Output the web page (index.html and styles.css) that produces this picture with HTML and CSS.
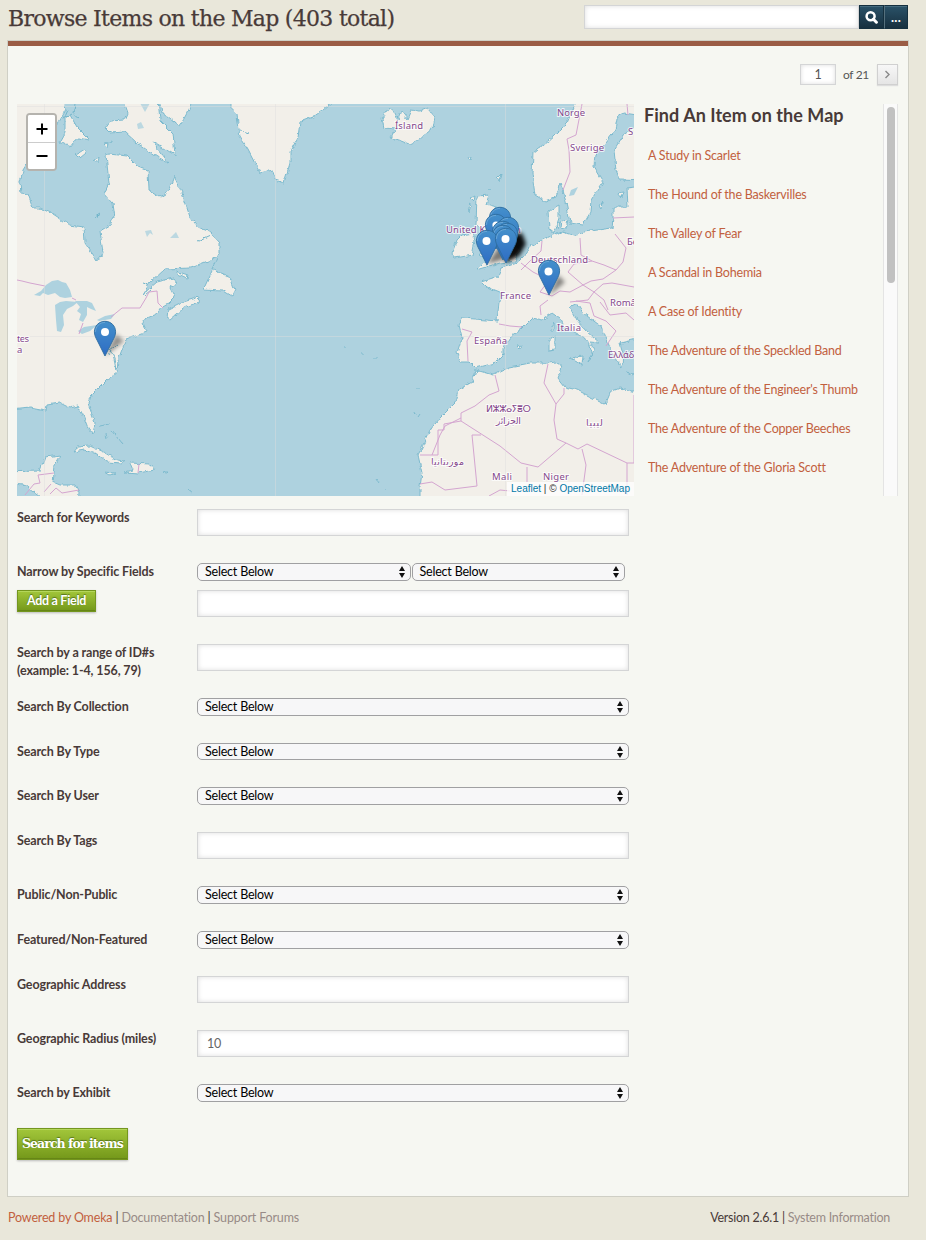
FILE: index.html
```html
<!DOCTYPE html>
<html lang="en">
<head>
<meta charset="utf-8">
<title>Browse Items on the Map</title>
<link rel="stylesheet" href="styles.css">
</head>
<body>
<svg class="defs" width="0" height="0" aria-hidden="true">
  <symbol id="updown" viewBox="0 0 6 12"><path d="M3 0L6 5H0zM0 7H6L3 12z" fill="#111"/></symbol>
</svg>
<header class="top">
  <h1 class="title">Browse Items on the Map (403 total)</h1>
  <form class="site-search">
    <input class="site-query" type="text" aria-label="Search">
    <button class="dark" type="button" aria-label="Search"><svg width="13" height="13" viewBox="0 0 13 13"><circle cx="5.6" cy="5.3" r="4" fill="none" stroke="#fff" stroke-width="2.5"/><path d="M8.4 8.2L11.400 11.200" stroke="#fff" stroke-width="3" stroke-linecap="round"/></svg></button>
    <button class="dark more" type="button">...</button>
  </form>
</header>
<main class="panel">
  <nav class="pager">
    <span class="page-no">1</span><span class="page-of">of 21</span>
    <a class="next"><svg width="7" height="9" viewBox="0 0 7 9"><path d="M1.5 1L5 4.5L1.5 8" fill="none" stroke="#888" stroke-width="1.4"/></svg></a>
  </nav>
  <section class="browse">
    <div class="map">
      <svg class="tiles" width="617" height="392" viewBox="17 104 617 392">
        <defs>
          <filter id="rough" filterUnits="userSpaceOnUse" x="0" y="90" width="650" height="420" color-interpolation-filters="sRGB">
            <feTurbulence type="fractalNoise" baseFrequency=".17" numOctaves="2" seed="4"/>
            <feDisplacementMap in="SourceGraphic" scale="5" xChannelSelector="R" yChannelSelector="G"/>
          </filter>
          <filter id="soft" x="-50%" y="-50%" width="200%" height="200%"><feGaussianBlur stdDeviation="2.2"/></filter>
          <linearGradient id="blue" x2="0" y2="1"><stop offset="0" stop-color="#4490cb"/><stop offset="1" stop-color="#2e6cc4"/></linearGradient>
          <symbol id="pin" viewBox="-1 -1 24 37" overflow="visible"><path d="M11 .3C5 .3 .4 5 .4 10.8C.4 14 1.6 16.4 3.1 19.2L11 35L18.900 19.200C20.400 16.400 21.600 14 21.600 10.800C21.600 5 17 .3 11 .3z" fill="url(#blue)" stroke="#2e6c9e" stroke-width=".9"/><path d="M11 1.400C5.600 1.400 1.500 5.600 1.500 10.800" fill="none" stroke="#72abd8" stroke-width=".8"/></symbol>
        </defs>
        <rect x="17" y="104" width="617" height="392" fill="#aed2df"/>
        <g filter="url(#rough)">
          <g class="land">
            <path d="M0 90H60L66 108L58 122L50 134L44 143L28 162L23 170L20 182L21 193L28 194L33 208L40 208L53 214L70 225L84 227L85 243L97 261L103 253L100 231L110 225L114 217L112 203L104 194L109 183L106 155L110 154L127 156L138 167L148 171L149 190L160 197L168 192L174 176L182 193L190 217L198 227L210 232L220 243L220 253L213 259L190 268L165 269L150 283L143 294L157 282L173 278L177 283L170 287L175 297L168 304L161 308L157 314L147 318L143 323L147 332L127 339L123 347L118 360L117 373L107 380L90 397L88 403L95 423L93 434L88 428L83 415L78 406L70 408L60 403L47 405L46 411L30 408L0 411z"/>
            <path d="M120 90L128 113L125 120L110 121L105 128L110 133L125 132L137 143L157 157L168 162L153 142L175 155L173 133L160 120L157 90z"/>
            <path d="M157 90L162 112L180 126L187 113L197 90zM65 117L70 115L77 127L85 135L90 140L77 138L70 147L60 142L65 133zM76 154L84 149L86 153L80 158zM94 160L99 157L98 163zM104 144L108 143L107 147zM110 142L112 141L112 143z"/>
            <path d="M218 258L211 273L205 286L202 289L222 290L232 296L235 290L230 277L213 270M176 271L188 275L187 278L178 274zM167 318L168 309L180 303L193 299L199 297L198 302L184 308L176 315L170 320z"/>
            <path d="M232 90V110L237 115L240 137L248 150L260 173L273 170L275 180L284 183L290 163L290 152L298 137L300 122L313 117L323 110L333 102L340 90z"/>
            <path d="M382 118L389 108L395 113L398 120L401 111L407 119L411 110L420 111L427 108L435 117L433 128L420 139L410 144L400 140L390 138L396 129L384 128z"/>
            <path d="M477 196L489 195L486 204L497 207L493 216L503 232L515 244L520 250L515 261L500 263L477 270L487 260L480 255L487 247L484 233L476 224zM462 235L473 233L475 240L472 255L455 258L452 253L457 240zM470 198L474 196L473 201zM468 206L471 204L469 212zM488 190L491 190zM497 178L501 174L499 182zM468 158L471 157L470 161z"/>
            <path d="M581 90L567 123L553 137L533 153L532 173L535 195L545 201L555 197L560 183L563 190L567 207L570 223L583 225L590 213L591 200L603 182L594 167L595 153L605 143L615 130L617 118L624 113L650 117V90zM650 127L634 128L623 135L614 150L616 170L620 180L650 181z"/>
            <path d="M650 185L627 188L628 207L613 207L613 218L612 228L583 232L577 236L563 232L556 235L549 229L548 211L559 205L559 218L555 230L551 236L542 240L530 247L523 257L517 263L502 268L498 277L482 282L487 287L500 292L502 300L499 302L497 321L487 320L463 318L459 325L462 337L457 353L461 362L470 362L476 368L495 363L503 355L503 347L510 337L522 328L532 318L542 320L553 313L560 318L565 328L587 340L592 355L588 361L594 350L590 342L600 343L587 332L577 320L570 307L577 303L583 313L602 327L608 343L617 363L622 367L623 353L620 343L650 336z"/>
            <path d="M650 395L620 388L610 392L605 404L597 400L577 390L565 387L558 378L562 368L557 362L548 363L530 363L510 367L493 375L476 370L472 382L458 390L455 403L440 418L430 430L422 447L418 455L422 473L420 487L420 510H650z"/>
            <path d="M550 338L555 335V350L550 351zM552 326L554 323V332L552 332zM570 358L583 356L582 365zM517 346L522 345L520 349zM626 372L634 374L633 376zM618 193L624 192L622 198zM599 206L602 201L601 209zM556 224L560 222L558 229zM562 220L568 221L566 228L561 227z"/>
            <path d="M0 472L40 471L45 457L61 455L55 465L53 482L60 485L75 485L79 492L78 510H60L34 492L24 484L0 482z"/>
            <path d="M73 452L77 447L90 446L105 453L117 460L125 461L121 463L108 462L97 454L85 450zM130 463L150 464L155 470L138 473L125 472L133 470zM105 472L115 473L110 475zM162 472L169 472L168 473z"/>
            <path d="M100 426L109 424M106 434L107 438M112 430L123 444M345 347L346 347M361 353L363 353M373 358L377 358M416 389L420 389M377 479L379 482M384 489L385 489M418 417L420 414M188 490L193 494M415 413L416 416"/>
          </g>
          <g class="water-lines"><path d="M118 344L110 350L114 358L116 370M111 350L108 355M67 110L63 119L72 114M75 104L73 114L79 119M96 217L101 214M142 283L148 285M197 242L210 236M151 290L145 295M240 130L249 133"/></g>
        </g>
        <g class="lakes">
          <path d="M34 295L41 291L46 285L52 281L58 280L62 282L66 283L70 290L72 297L65 298L60 297L55 293L48 295L43 293L40 296z"/>
          <path d="M55 305L60 302L66 301L78 302L73 306L67 309L63 315L64 325L61 332L57 331L56 320z"/>
          <path d="M75 301L87 301L92 303L96 311L91 309L87 307L87 315L83 322L79 320L81 314L77 311L80 307zM78 331L84 327L97 325L90 331L82 334zM97 320L105 316L115 314L111 319L99 321zM571 190L578 187L574 195L569 196z"/>
          <path d="M140 103L150 103L145 112zM137 124L141 122L144 128L138 129zM145 231L151 230L153 235L150 233L147 237zM170 238L176 232L179 238z" opacity=".8"/>
        </g>
        <g class="borders">
          <path d="M17 280L22 281L30 283L45 286M72 298L76 300M79 334L83 323M111 317L122 308L140 308L146 298L149 292L157 291L158 303L163 308M25 495L34 484L40 483L38 475L54 473M44 492L51 484M50 494L56 488L62 493L79 490M139 464L138 473"/>
          <path d="M582 104L576 135L567 139L569 150L570 172L563 190M627 104L628 115M613 218L634 217M580 238L581 255L592 261L604 265L616 270L623 262L626 248L615 234M542 241L541 251L530 261L521 270M521 263L533 272L549 280L540 292L552 296L560 291L570 292L583 285L568 272L574 264L592 261M583 285L591 281L603 279L616 270M583 285L594 292L603 284L612 283L634 287M594 292L588 300L570 302M548 300L540 306L541 315M499 324L510 326L522 327M462 329L472 332L467 341L468 361M576 301L590 303L594 316L606 321L616 331L606 346M600 302L610 315L626 313L634 320M594 292L604 300L608 310"/>
          <path d="M495 375L499 391L489 395L475 406L461 413V421L500 446L521 463L538 467L566 443L578 449L587 444L627 463V495M461 421L444 424V430H438V455H420M481 435H472L477 486L445 490L432 482L420 484M548 364L544 383L556 404L554 420L557 439L566 443M556 404L564 394V388M582 449L586 465L582 495M634 395V463H627M527 467V482M461 418L445 426L440 435L432 455M489 496L500 490L510 491"/>
        </g>
        <path class="grid" d="M44.500 104V496M275.500 104V496M505.500 104V496M17 106.500H634M17 336.500H634"/>
        <g class="names">
          <text x="395" y="129" textLength="28">Ísland</text><text x="557" y="116" textLength="28">Norge</text><text x="570" y="151" textLength="34">Sverige</text><text x="628" y="135">S</text>
          <text x="446" y="233" textLength="75">United Kingdom</text><text x="531" y="263" textLength="57">Deutschland</text><text x="500" y="299" textLength="31">France</text><text x="627" y="245">Бе</text><text x="610" y="306">România</text>
          <text x="474" y="344" textLength="33">España</text><text x="557" y="331" textLength="24">Italia</text><text x="608" y="358">Ελλάδα</text><text x="486" y="412" textLength="45">ⵍⵣⵣⴰⵢⴻⵔ</text><text x="496" y="424" textLength="25">الجزائر</text><text x="586" y="426" textLength="17">ليبيا</text><text x="431" y="465" textLength="33">موريتانيا</text>
          <text x="492" y="480" textLength="20">Mali</text><text x="543" y="480" textLength="26">Niger</text><text x="-22" y="342" textLength="51">United States</text><text x="17" y="353">a</text>
        </g>
        <g class="shadows" filter="url(#soft)"><path d="M105 356L116 334L124 341z" opacity=".4"/><path d="M505 263L511 235L522 233L526 244L519 256z" opacity=".95"/><path d="M487 264L500 245L508 258z" opacity=".5"/><path d="M549 296L558 275L565 282z" opacity=".45"/></g>
        <use href="#pin" x="488" y="206" width="24" height="37"/>
        <use href="#pin" x="484" y="213" width="24" height="37"/><circle cx="496" cy="225" r="3.600" fill="#fff"/>
        <use href="#pin" x="496" y="216" width="24" height="37"/>
        <use href="#pin" x="491" y="220" width="24" height="37"/>
        <use href="#pin" x="495" y="222" width="24" height="37"/>
        <use href="#pin" x="491" y="224" width="24" height="37"/>
        <use href="#pin" x="475" y="229" width="24" height="37"/><circle cx="486.500" cy="241" r="4" fill="#fff"/>
        <use href="#pin" x="494" y="227" width="24" height="37"/><circle cx="505.500" cy="239" r="4" fill="#fff"/>
        <use href="#pin" x="537" y="259" width="24" height="37"/><circle cx="548.500" cy="271.500" r="4" fill="#fff"/>
        <use href="#pin" x="93" y="320" width="24" height="37"/><circle cx="105" cy="332" r="4" fill="#fff"/>
      </svg>
      <div class="zoom">
        <button type="button" aria-label="Zoom in"><svg width="12" height="12"><path d="M6 .5V11.500M.5 6H11.500" stroke="#000" stroke-width="2"/></svg></button>
        <button type="button" aria-label="Zoom out"><svg width="12" height="12"><path d="M.5 6H11.500" stroke="#000" stroke-width="2"/></svg></button>
      </div>
      <div class="credit"><a>Leaflet</a> | © <a>OpenStreetMap</a></div>
    </div>
    <aside class="items">
      <div class="items-body">
        <h2>Find An Item on the Map</h2>
        <ul>
          <li>A Study in Scarlet</li><li>The Hound of the Baskervilles</li><li>The Valley of Fear</li><li>A Scandal in Bohemia</li><li>A Case of Identity</li><li>The Adventure of the Speckled Band</li><li>The Adventure of the Engineer's Thumb</li><li>The Adventure of the Copper Beeches</li><li>The Adventure of the Gloria Scott</li>
        </ul>
      </div>
      <div class="track"><div class="thumb"></div></div>
    </aside>
  </section>
  <form class="filters">
    <div class="row tall"><label>Search for Keywords</label><input type="text"></div>
    <div class="row narrow">
      <div><label>Narrow by Specific Fields</label><button class="green add" type="button">Add a Field</button></div>
      <div class="stack">
        <div class="pair"><div class="select">Select Below<svg><use href="#updown"/></svg></div><div class="select">Select Below<svg><use href="#updown"/></svg></div></div>
        <input type="text">
      </div>
    </div>
    <div class="row tall"><label>Search by a range of ID#s<br>(example: 1-4, 156, 79)</label><input type="text"></div>
    <div class="row"><label>Search By Collection</label><div class="select">Select Below<svg><use href="#updown"/></svg></div></div>
    <div class="row"><label>Search By Type</label><div class="select">Select Below<svg><use href="#updown"/></svg></div></div>
    <div class="row"><label>Search By User</label><div class="select">Select Below<svg><use href="#updown"/></svg></div></div>
    <div class="row tall"><label>Search By Tags</label><input type="text"></div>
    <div class="row status"><label>Public/Non-Public</label><div class="select">Select Below<svg><use href="#updown"/></svg></div></div>
    <div class="row status"><label>Featured/Non-Featured</label><div class="select">Select Below<svg><use href="#updown"/></svg></div></div>
    <div class="row tall"><label>Geographic Address</label><input type="text"></div>
    <div class="row tall"><label>Geographic Radius (miles)</label><input type="text" value="10"></div>
    <div class="row last"><label>Search by Exhibit</label><div class="select">Select Below<svg><use href="#updown"/></svg></div></div>
    <button class="green submit" type="button">Search for items</button>
  </form>
</main>
<footer class="foot">
  <div class="foot-left"><a class="brand">Powered by Omeka</a> | <a>Documentation</a> | <a>Support Forums</a></div>
  <div class="foot-right">Version 2.6.1 | <a>System Information</a></div>
</footer>
</body>
</html>
```
FILE: styles.css
```css
* { box-sizing: border-box; }
body { margin: 0; width: 926px; height: 1240px; overflow: hidden; background: #e9e7da; color: #483a38; font: 12.500px/18px Lato, "Open Sans", sans-serif; letter-spacing: -.2px; }
.defs { position: absolute; }
input, button { font: inherit; letter-spacing: inherit; margin: 0; }
.top { height: 40px; padding: 5px 18px 0 8px; display: flex; justify-content: space-between; align-items: flex-start; }
.title { margin: 0; font: 400 22px/27px "DejaVu Serif", serif; letter-spacing: -.71px; white-space: nowrap; -webkit-text-stroke: .25px #483a38; }
.site-search { display: flex; width: 324px; height: 24px; }
input { border: 1.500px solid #d4d5d6; background: #fff; box-shadow: inset 0 0 5px #ddd; color: #666; padding: 0 9px; outline: 0; }
.site-query { flex: 1; min-width: 0; }
.dark { width: 25px; padding: 0; border: 1px solid #15303f; background: linear-gradient(#2a5268, #17303f); box-shadow: inset 0 1px #456b7e; color: #fff; display: flex; align-items: center; justify-content: center; }
.more { width: 24px; border-left-color: #55707d; font: bold 13px/16px Lato, sans-serif; letter-spacing: .3px; }
.panel { margin-left: 7px; width: 902px; height: 1157px; border: 1px solid #cfcfc5; background: #f6f7f2; }
.panel::before { content: ""; display: block; height: 5px; background: #9a5c45; }
.pager { height: 58px; padding: 18px 10px 0; display: flex; justify-content: flex-end; align-items: flex-start; line-height: 21px; color: #555; letter-spacing: -.35px; }
.page-no { width: 36px; height: 21px; line-height: 19px; text-align: center; border: 1px solid #d4d5d6; background: #fff; box-shadow: inset 0 0 4px #ddd; }
.page-of { width: 25px; margin: 0 9px 0 7px; font-size: 12px; white-space: nowrap; }
.next { width: 21px; height: 21px; border: 1px solid #d0d0d0; background: linear-gradient(#f7f7f7, #e5e5e5); box-shadow: 0 1px 1px #ddd; display: flex; align-items: center; justify-content: center; }
.browse { display: flex; margin-left: 9px; height: 392px; }
.map { position: relative; width: 617px; height: 392px; overflow: hidden; }
.tiles { display: block; }
.land { fill: #f2efe9; stroke: #7dbace; stroke-width: 1; }
.lakes { fill: #aed2df; }
.water-lines { fill: none; stroke: #72b5ca; stroke-width: 1; }
.borders { fill: none; stroke: #d4a5d0; stroke-width: 1; stroke-linejoin: round; }
.grid { stroke: #ddd; stroke-opacity: .45; fill: none; }
.names { font: 9.500px "Noto Sans", "DejaVu Sans", sans-serif; letter-spacing: 0; fill: #85478c; stroke: #fff; stroke-opacity: .75; stroke-width: 2px; paint-order: stroke; }
.shadows { fill: #000; }
.zoom { position: absolute; left: 9px; top: 9px; width: 31px; border: 2px solid #b5b3ae; border-radius: 4px; background: #fff; overflow: hidden; }
.zoom button { display: flex; align-items: center; justify-content: center; width: 27px; height: 27px; border: 0; padding: 0; background: #fff; }
.zoom button + button { border-top: 1px solid #ccc; }
.credit { position: absolute; right: 0; bottom: 0; height: 14px; padding: 0 4px; background: rgba(255, 255, 255, .75); font: 10px/14px "Liberation Sans", sans-serif; letter-spacing: 0; color: #333; white-space: nowrap; }
.credit a { color: #0078a8; }
.items { width: 264px; display: flex; justify-content: space-between; }
.items-body { padding-left: 10px; white-space: nowrap; }
.items h2 { margin: 0; font: 700 18px/23px Lato, sans-serif; letter-spacing: .05px; }
.items ul { list-style: none; margin: 19px 0 0 4px; padding: 0; }
.items li { height: 39px; color: #c2603e; line-height: 20px; }
.track { width: 15px; padding: 3px 3px; border: 1px solid #e4e4e4; border-width: 0 1px; background: #fafafa; }
.thumb { width: 8px; height: 176px; border-radius: 4px; background: #c1c1c1; }
.filters { padding: 13px 0 0 9px; }
.row { display: grid; grid-template-columns: 180px 432px; height: 44.700px; align-items: start; }
.tall { height: 54px; }
.narrow { height: 81px; }
.status { height: 45px; }
.last { height: 44px; }
.row label { display: block; font-weight: 700; letter-spacing: -.13px; }
.row input { display: block; width: 432px; height: 27px; }
.select { position: relative; height: 17.700px; border: 1px solid #a0a0a2; border-radius: 5px; background: #f7f7f8; color: #000; line-height: 16px; padding-left: 7px; }
.select svg { position: absolute; right: 5px; top: 2px; width: 6px; height: 12px; }
.pair { display: flex; gap: 1px; height: 27px; }
.pair .select { width: 213.500px; }
.green { color: #fff; font-weight: 700; padding: 0; border: 1px solid #74961f; background: linear-gradient(#a2c63a, #74981a); box-shadow: inset 0 1px #b4d65a, inset 0 -1px #668616, 0 1px 2px #bbb; text-shadow: 0 -1px 1px #55721a; }
.add { width: 79px; height: 22px; margin-top: 9px; line-height: 20px; display: block; letter-spacing: -.3px; }
.submit { width: 111px; height: 32px; font: 700 12.500px/28px "DejaVu Serif", serif; letter-spacing: -.95px; white-space: nowrap; }
.foot { display: flex; justify-content: space-between; padding: 12px 36px 0 8px; white-space: nowrap; color: #483a38; }
.foot-left { letter-spacing: -.17px; }
.foot-right { letter-spacing: -.25px; }
.foot a { color: #988b87; }
.foot .brand { color: #c2603e; }
```
